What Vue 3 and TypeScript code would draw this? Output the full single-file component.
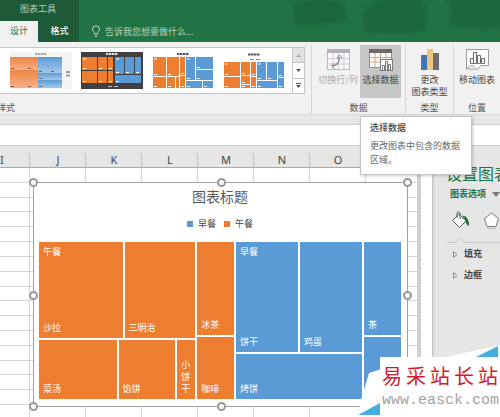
<script setup lang="ts">
interface Rect {
  x: number
  y: number
  w: number
  h: number
  blue: boolean
}
interface Thumb {
  name: string
  kind: 'soft' | 'dark' | 'plain' | 'legend'
}

const thumbs: Thumb[] = [
  { name: '样式 1', kind: 'soft' },
  { name: '样式 2', kind: 'dark' },
  { name: '样式 3', kind: 'plain' },
  { name: '样式 4', kind: 'legend' },
]

const fullRects: Rect[] = [
  { x: 1, y: 5, w: 13, h: 19, blue: false },
  { x: 15, y: 5, w: 12, h: 19, blue: false },
  { x: 28, y: 5, w: 5, h: 18, blue: false },
  { x: 1, y: 25, w: 13, h: 11, blue: false },
  { x: 15, y: 25, w: 8, h: 11, blue: false },
  { x: 24, y: 25, w: 3, h: 11, blue: false },
  { x: 28, y: 24, w: 5, h: 12, blue: false },
  { x: 34, y: 5, w: 9, h: 23, blue: true },
  { x: 44, y: 5, w: 17, h: 12, blue: true },
  { x: 44, y: 18, w: 17, h: 10, blue: true },
  { x: 34, y: 29, w: 16, h: 7, blue: true },
  { x: 51, y: 29, w: 10, h: 7, blue: true },
]
const softRects: Rect[] = [
  { x: 0, y: 5, w: 17, h: 13, blue: false },
  { x: 17, y: 5, w: 11, h: 13, blue: false },
  { x: 0, y: 18, w: 17, h: 18, blue: false },
  { x: 17, y: 18, w: 11, h: 18, blue: false },
  { x: 28, y: 5, w: 12, h: 16, blue: true },
  { x: 40, y: 5, w: 12, h: 16, blue: true },
  { x: 28, y: 21, w: 24, h: 7, blue: true },
  { x: 28, y: 28, w: 24, h: 8, blue: true },
]
const darkRects: Rect[] = [
  { x: 1, y: 5, w: 15, h: 13, blue: false },
  { x: 17, y: 5, w: 9, h: 13, blue: false },
  { x: 27, y: 5, w: 5, h: 13, blue: false },
  { x: 1, y: 19, w: 15, h: 12, blue: false },
  { x: 17, y: 19, w: 9, h: 12, blue: false },
  { x: 27, y: 19, w: 5, h: 12, blue: false },
  { x: 34, y: 5, w: 9, h: 17, blue: true },
  { x: 44, y: 5, w: 9, h: 17, blue: true },
  { x: 54, y: 5, w: 6, h: 17, blue: true },
  { x: 34, y: 23, w: 26, h: 8, blue: true },
]
const legendRects: Rect[] = [
  { x: 1, y: 10, w: 16, h: 14, blue: false },
  { x: 18, y: 10, w: 9, h: 13, blue: false },
  { x: 28, y: 10, w: 5, h: 14, blue: false },
  { x: 1, y: 25, w: 16, h: 11, blue: false },
  { x: 18, y: 24, w: 9, h: 8, blue: false },
  { x: 18, y: 33, w: 9, h: 3, blue: false },
  { x: 28, y: 25, w: 5, h: 11, blue: false },
  { x: 34, y: 10, w: 9, h: 18, blue: true },
  { x: 44, y: 10, w: 10, h: 18, blue: true },
  { x: 55, y: 10, w: 6, h: 15, blue: true },
  { x: 34, y: 29, w: 20, h: 7, blue: true },
  { x: 55, y: 26, w: 6, h: 10, blue: true },
]
const rectsOf: Record<Thumb['kind'], Rect[]> = {
  soft: softRects,
  dark: darkRects,
  plain: fullRects,
  legend: legendRects,
}
function fillOf(kind: Thumb['kind'], blue: boolean): string {
  if (kind === 'soft') return blue ? 'url(#soft-blue)' : 'url(#soft-orange)'
  return blue ? '#5b9bd5' : '#ed7d31'
}

const columns: string[] = ['I', 'J', 'K', 'L', 'M', 'N', 'O']
const rowCount = 17
const handles: string[] = ['nw', 'n', 'ne', 'w', 'e', 'sw', 's', 'se']
const brand: string[] = ['易', '采', '站', '长', '站']
</script>

<template>
  <div class="app">
    <header class="titlebar">
      <svg class="smudge" width="230" height="42" viewBox="0 0 230 42" aria-hidden="true">
        <defs><filter id="haze"><feGaussianBlur stdDeviation="2" /></filter></defs>
        <g fill="#1f663c" filter="url(#haze)">
          <path d="M14 4 Q30 -4 64 2 L66 22 Q40 26 14 24Z" />
          <path d="M82 10 Q100 -6 140 -4 L148 12 L146 31 Q110 37 84 31Z" />
          <path d="M164 -4 H236 V28 Q190 31 166 26 Q176 12 164 -4Z" />
        </g>
      </svg>
      <div class="context">
        <span class="context-name">图表工具</span>
        <nav class="tabs">
          <a class="tab active" href="#design">设计</a>
          <a class="tab" href="#format">格式</a>
        </nav>
      </div>
      <button class="tellme" type="button">
        <svg width="10" height="13" viewBox="0 0 10 13" fill="none" stroke="#c5dccd" aria-hidden="true">
          <path d="M3.5 9 V8 C3.5 7 1.5 6.3 1.5 4.3 A3.5 3.5 0 0 1 8.5 4.3 C8.5 6.3 6.5 7 6.5 8 V9 M3.5 9.5 H6.5 M4 11.5 H6" />
        </svg>
        <span>告诉我您想要做什么...</span>
      </button>
    </header>

    <section class="ribbon">
      <div class="group styles">
        <div class="gallery">
          <div class="thumbs">
            <button v-for="t in thumbs" :key="t.name" class="thumb" type="button" :aria-label="t.name">
              <svg width="62" height="37" viewBox="0 0 62 37" aria-hidden="true">
                <defs>
                  <linearGradient id="soft-orange" x1="0" y1="0" x2="0" y2="1">
                    <stop offset="0" stop-color="#ee8543" /><stop offset="1" stop-color="#f7b08a" />
                  </linearGradient>
                  <linearGradient id="soft-blue" x1="0" y1="0" x2="0" y2="1">
                    <stop offset="0" stop-color="#5b9bd5" /><stop offset="1" stop-color="#a5c8ea" />
                  </linearGradient>
                </defs>
                <rect width="62" height="37" :fill="t.kind === 'dark' ? '#404040' : t.kind === 'soft' ? '#f4f4f4' : '#fff'" />
                <path
                  :d="t.kind === 'legend' ? 'M25 2.5 H37' : 'M25 2 H37'"
                  :stroke="t.kind === 'dark' ? '#ddd' : t.kind === 'soft' ? '#aaa' : '#555'"
                  stroke-width="2" stroke-dasharray="2.5 .5"
                />
                <path v-if="t.kind === 'legend'" d="M27 7.5 H31 M33 7.5 H37" stroke="#888" />
                <path v-if="t.kind === 'dark'" d="M27 34.5 H31 M33 34.5 H37" stroke="#bbb" />
                <path v-if="t.kind === 'soft'" d="M56 20 H60 M56 23.500 H60" stroke="#999" stroke-width="2" />
                <g v-for="(r, i) in rectsOf[t.kind]" :key="i">
                  <rect :x="r.x" :y="r.y" :width="r.w" :height="r.h" :fill="fillOf(t.kind, r.blue)" />
                  <path
                    v-if="r.w > 4"
                    :d="`M${r.x + 1} ${r.y + r.h - 1.5} h3`"
                    :stroke="t.kind === 'soft' ? '#805a48' : '#fff'"
                  />
                </g>
                <path v-if="t.kind !== 'soft'" :d="t.kind === 'legend' ? 'M2 12 h3 M35 12 h3' : 'M2 7 h3 M35 7 h3'" stroke="#fff" />
              </svg>
            </button>
          </div>
          <div class="scroller">
            <button type="button" class="off" aria-label="上一行">
              <svg width="5" height="3" viewBox="0 0 5 3"><path d="M0 3 L2.500 0 L5 3Z" fill="#aaa" /></svg>
            </button>
            <button type="button" aria-label="下一行">
              <svg width="5" height="3" viewBox="0 0 5 3"><path d="M0 0 L2.500 3 L5 0Z" fill="#555" /></svg>
            </button>
            <button type="button" aria-label="其他">
              <svg width="5" height="5" viewBox="0 0 5 5"><path d="M0 0 H5 V1 H0Z M0 2 L2.500 5 L5 2Z" fill="#555" /></svg>
            </button>
          </div>
        </div>
        <span class="caption start">样式</span>
      </div>

      <div class="group data">
        <div class="buttons">
          <button class="big disabled" type="button" disabled>
            <svg width="23" height="22" viewBox="0 0 23 22" fill="none" aria-hidden="true">
              <rect x=".5" y=".5" width="22" height="20" fill="#faf8fb" stroke="#bdb6c0" />
              <path d="M0 0 H23 V4 H0Z" fill="#b5aeb8" />
              <path d="M6 4 V20 M11.500 4 V20 M17 4 V20 M1 9.500 H22 M1 15 H22" stroke="#d0cad3" />
              <path d="M5 17 Q12 17 12.500 8" stroke="#8f8794" stroke-width="1.500" />
              <path d="M9.500 9.500 L12.700 6 L15.500 9.500 M7.500 14 L4.500 17 L7.500 19.500" stroke="#8f8794" />
            </svg>
            <span>切换行/列</span>
          </button>
          <div class="tip-anchor">
            <button class="big picked" type="button" aria-describedby="tip">
              <svg width="24" height="22" viewBox="0 0 24 22" fill="none" aria-hidden="true">
                <rect x=".5" y=".5" width="22" height="18" fill="#fff" stroke="#9b8a80" />
                <path d="M0 0 H23 V4 H0Z" fill="#6d6866" />
                <path d="M6 4 V18 M11.500 4 V18 M17 4 V18 M1 8.500 H22 M1 13 H22" stroke="#d9a27d" />
                <rect x="11.500" y="10.500" width="12" height="11" fill="#fff" stroke="#777" />
                <path d="M13.500 21 V16.500 H15.500 V21 M16.500 21 V12.500 H18.500 V21 M19.500 21 V15.500 H21.500 V21" stroke="#777" />
              </svg>
              <span>选择数据</span>
            </button>
            <div id="tip" class="tooltip" role="tooltip">
              <strong>选择数据</strong>
              <p>更改图表中包含的数据区域。</p>
            </div>
          </div>
        </div>
        <span class="caption">数据</span>
      </div>

      <div class="group type">
        <div class="buttons">
          <button class="big" type="button">
            <svg width="18" height="22" viewBox="0 0 18 22" aria-hidden="true">
              <path d="M0 6 H6 V21 H0Z" fill="#3f76b5" />
              <path d="M6 0 H12 V21 H6Z" fill="#eec57c" />
              <path d="M12 4 H18 V21 H12Z" fill="#6f6f6f" />
            </svg>
            <span>更改<br />图表类型</span>
          </button>
        </div>
        <span class="caption">类型</span>
      </div>

      <div class="group place">
        <div class="buttons">
          <button class="big" type="button">
            <svg width="23" height="22" viewBox="0 0 23 22" fill="none" stroke="#6b6b6b" aria-hidden="true">
              <path d="M.5 .5 H22.500 V16.500 H15 L12 20 H.5Z" fill="#fff" stroke="#999" />
              <path d="M4.500 14.500 V9.500 H7.500 V14.500Z M7.500 14.500 V3.500 H10.500 V14.500Z M11.500 14.500 V6.500 H14.500 V14.500Z M15.500 14.500 V9.500 H18.500 V14.500Z" />
              <path d="M1 19 L6 16.500 L9 18.500" stroke="#999" />
            </svg>
            <span>移动图表</span>
          </button>
        </div>
        <span class="caption">位置</span>
      </div>
    </section>

    <input class="formula" type="text" aria-label="编辑栏" />

    <main class="work">
      <section class="sheet">
        <table class="grid">
          <colgroup>
            <col class="c-first" />
            <col v-for="n in 6" :key="n" class="c-mid" />
            <col />
          </colgroup>
          <thead>
            <tr>
              <th v-for="c in columns" :key="c" scope="col">{{ c }}</th>
              <th></th>
            </tr>
          </thead>
          <tbody>
            <tr v-for="r in rowCount" :key="r">
              <td v-for="c in columns" :key="c"></td>
              <td></td>
            </tr>
          </tbody>
        </table>

        <article class="chart">
          <h1>图表标题</h1>
          <ul class="legend">
            <li><i class="blue"></i>早餐</li>
            <li><i class="orange"></i>午餐</li>
          </ul>
          <div class="treemap">
            <div class="half lunch">
              <div class="stack wide">
                <div class="line upper">
                  <div class="tile salad"><span>午餐</span><span>沙拉</span></div>
                  <div class="tile sandwich"><span>三明治</span></div>
                </div>
                <div class="line lower">
                  <div class="tile soup"><span>菜汤</span></div>
                  <div class="tile pie"><span>馅饼</span></div>
                  <div class="tile cookie"><span>小饼干</span></div>
                </div>
              </div>
              <div class="stack narrow">
                <div class="tile tea"><span>冰茶</span></div>
                <div class="tile coffee"><span>咖啡</span></div>
              </div>
            </div>
            <div class="half breakfast">
              <div class="stack wide">
                <div class="line tall">
                  <div class="tile even"><span>早餐</span><span>饼干</span></div>
                  <div class="tile even"><span>鸡蛋</span></div>
                </div>
                <div class="tile short"><span>烤饼</span></div>
              </div>
              <div class="stack narrow">
                <div class="tile tea"><span>茶</span></div>
                <div class="tile coffee"></div>
              </div>
            </div>
          </div>
          <b v-for="h in handles" :key="h" class="handle" :class="h"></b>
        </article>
      </section>

      <aside class="pane">
        <h2>设置图表区格式</h2>
        <button class="options" type="button">
          <span>图表选项</span>
          <svg width="8" height="5" viewBox="0 0 8 5"><path d="M0 0 H8 L4 5Z" fill="#777" /></svg>
        </button>
        <div class="icons">
          <button type="button" aria-label="填充与线条">
            <svg width="19" height="18" viewBox="0 0 19 18" fill="none" aria-hidden="true">
              <path d="M8 3 L15 10 L8.500 16.500 L1.500 9.500Z" fill="#fff" stroke="#555" />
              <path d="M6 7 V2.500 Q6 1 7.500 1 Q9 1 9 2.500 V8" stroke="#217346" />
              <path d="M11 4.500 Q18.500 5 18 15 Q14 13 15 9.500Z" fill="#217346" />
            </svg>
          </button>
          <button type="button" aria-label="效果">
            <svg width="17" height="17" viewBox="0 0 17 17" fill="none" stroke="#777" aria-hidden="true">
              <path d="M8.500 1 L15.500 6.500 L13 14.500 H4 L1.500 6.500Z" fill="#fff" />
              <path d="M4 16.500 H13" stroke="#bbb" />
            </svg>
          </button>
        </div>
        <svg class="notch" width="60" height="6" viewBox="0 0 60 6" fill="none" aria-hidden="true">
          <path d="M0 5.500 H9 L14 .5 L19 5.500 H60" stroke="#c8c8c8" />
        </svg>
        <button v-for="s in ['填充', '边框']" :key="s" class="section" type="button">
          <svg width="5" height="7" viewBox="0 0 5 7"><path d="M.5 .7 L4 3.500 L.5 6.300Z" fill="none" stroke="#888" /></svg>
          <span>{{ s }}</span>
        </button>
      </aside>
    </main>

    <div class="mark">
      <svg width="142" height="71" viewBox="0 0 142 71" aria-hidden="true">
        <path d="M0 71 L3 54 L11 27 L24 23 V11 H88 L139 0 H142 V71Z" fill="#fff" />
        <path d="M0 69 L22 57 V69Z M118 11 L140 0 V11Z" fill="#45aede" />
      </svg>
      <div class="plate">
        <div class="brand"><span v-for="(c, i) in brand" :key="i">{{ c }}</span></div>
        <span class="site">www.easck.com</span>
      </div>
    </div>
  </div>
</template>

<style>
body {
  margin: 0;
}
</style>

<style scoped>
.app {
  position: relative;
  display: flex;
  flex-direction: column;
  height: 100vh;
  overflow: hidden;
  background: #e6e6e6;
  color: #444;
  font: 9px/12px "Noto Sans CJK SC", sans-serif;
}
.app * {
  box-sizing: border-box;
}
button {
  margin: 0;
  padding: 0;
  border: 0;
  background: none;
  color: inherit;
  font: inherit;
}
svg {
  display: block;
  flex: none;
}

.titlebar {
  position: relative;
  display: flex;
  align-items: stretch;
  flex: none;
  background: #227446;
}
.smudge {
  position: absolute;
  top: 0;
  right: -10px;
}
.context {
  width: 79px;
  background: #1d5a37;
}
.context-name {
  display: block;
  padding: 2px 0 5px 20px;
  line-height: 14px;
  color: #b3cfbd;
}
.tabs {
  display: flex;
}
.tab {
  width: 41px;
  height: 21px;
  padding-left: 2px;
  color: #fff;
  font-weight: 500;
  line-height: 19px;
  text-align: center;
  text-decoration: none;
}
.tab.active {
  width: 38px;
  padding: 0;
  background: #f1f1f1;
  color: #217346;
  font-weight: 400;
}
.tellme {
  display: flex;
  align-items: center;
  align-self: flex-end;
  gap: 4px;
  height: 21px;
  margin-left: 12px;
  color: #b3d2bf;
}

.ribbon {
  display: flex;
  flex: none;
  height: 73px;
  padding-top: 3px;
  background: #f1f1f1;
  border-bottom: 1px solid #d8d8d8;
}
.group {
  display: flex;
  flex-direction: column;
  align-items: center;
  justify-content: space-between;
  border-right: 1px solid #d6d6d6;
}
.group.styles {
  flex: 1;
  align-items: stretch;
  padding: 2px 6px 0 0;
}
.group.data {
  width: 94px;
}
.group.type {
  width: 48px;
}
.group.place {
  width: 46px;
  border-right: 0;
}
.caption {
  color: #555;
}
.caption.start {
  margin-left: -3px;
}
.gallery {
  display: flex;
  height: 47px;
  border: 1px solid #c6c6c6;
  border-left: 0;
  background: #fff;
}
.thumbs {
  display: flex;
  flex: 1;
  align-items: center;
  gap: 9px;
  padding-left: 10px;
}
.scroller {
  display: flex;
  flex-direction: column;
  width: 12px;
  border-left: 1px solid #c6c6c6;
}
.scroller button {
  display: flex;
  flex: 1;
  align-items: center;
  justify-content: center;
}
.scroller button + button {
  border-top: 1px solid #c6c6c6;
}
.scroller .off {
  background: #e1e1e1;
}
.buttons {
  display: flex;
}
.big {
  display: flex;
  flex-direction: column;
  align-items: center;
  gap: 3px;
  width: 44px;
  height: 53px;
  padding-top: 4px;
  white-space: nowrap;
}
.big.disabled {
  color: #aaa;
}
.big.picked {
  width: 41px;
  background: #c6c6c6;
}
.tip-anchor {
  position: relative;
}
.tooltip {
  position: absolute;
  z-index: 5;
  top: 71px;
  left: 0;
  width: 112px;
  padding: 4px 8px 7px 9px;
  border: 1px solid #c4c4c4;
  background: #fff;
  box-shadow: 1px 1px 3px #0003;
  line-height: 14px;
}
.tooltip strong {
  display: block;
  font-weight: 500;
}
.tooltip p {
  margin: 4px 0 0;
  color: #666;
}

.formula {
  flex: none;
  width: 100%;
  height: 22px;
  margin-top: 9px;
  padding: 0 8px;
  border: solid #cfcfcf;
  border-width: 1px 0;
  background: #fff;
}

.work {
  display: flex;
  flex: 1;
  min-height: 0;
}
.sheet {
  position: relative;
  flex: 1;
  min-width: 0;
  border-right: 3px solid #d0d0d0;
}
.grid {
  width: 100%;
  height: calc(100% + 3px);
  table-layout: fixed;
  border-spacing: 0;
}
.c-first {
  width: 30px;
}
.c-mid {
  width: 56px;
}
.grid th {
  height: 22px;
  padding: 7px 0 0;
  border-bottom: 1px solid #ababab;
  background: linear-gradient(#c2c2c2, #c2c2c2) right bottom / 1px 14px no-repeat #e6e6e6;
  font: 11px/14px "Noto Sans", sans-serif;
}
.grid th:first-child {
  text-align: left;
}
.grid td {
  padding: 0;
  border: solid #d4d4d4;
  border-width: 0 1px 1px 0;
  background: #fff;
}

.chart {
  position: absolute;
  top: 36px;
  right: 10px;
  bottom: 10px;
  left: 33px;
  display: flex;
  flex-direction: column;
  padding: 3px 6px 7px 5px;
  border: 1px solid #a0a0a0;
  background: #fff;
}
.chart h1 {
  margin: 0;
  color: #595959;
  font-size: 14px;
  font-weight: 400;
  line-height: 20px;
  text-align: center;
}
.legend {
  display: flex;
  justify-content: center;
  gap: 8px;
  margin: 12px 0;
  padding: 0;
  list-style: none;
}
.legend li {
  display: flex;
  align-items: center;
  gap: 5px;
}
.legend i {
  width: 6px;
  height: 6px;
}
.legend .blue {
  background: #5b9bd5;
}
.legend .orange {
  background: #ed7d31;
}
.treemap {
  display: flex;
  flex: 1;
  gap: 2px;
}
.half {
  display: flex;
  gap: 2px;
}
.lunch {
  flex: 195;
}
.breakfast {
  flex: 165;
}
.stack {
  display: flex;
  flex-direction: column;
  gap: 2px;
}
.lunch .wide {
  flex: 157;
}
.breakfast .wide {
  flex: 126;
}
.narrow {
  flex: 37;
}
.line {
  display: flex;
  gap: 2px;
}
.upper {
  flex: 97;
}
.lower {
  flex: 59;
}
.tall {
  flex: 111;
}
.tile {
  display: flex;
  flex-direction: column;
  justify-content: space-between;
  min-width: 0;
  min-height: 0;
  background: #ed7d31;
  color: #fff;
}
.tile span {
  margin: 4px;
}
.tile span:only-child {
  margin-top: auto;
}
.breakfast .tile {
  background: #5b9bd5;
}
.salad {
  flex: 84 0 0;
}
.sandwich {
  flex: 71 0 0;
}
.soup {
  flex: 78 0 0;
}
.pie {
  flex: 57 0 0;
}
.cookie {
  flex: 18 0 0;
}
.tea {
  flex: 94 0 0;
}
.coffee {
  flex: 62 0 0;
}
.even {
  flex: 1 0 0;
}
.short {
  flex: 45 0 0;
}
.handle {
  position: absolute;
  width: 9px;
  height: 9px;
  border: 2px solid #989898;
  border-radius: 50%;
  background: #fff;
}
.nw, .n, .ne {
  top: -5px;
}
.sw, .s, .se {
  bottom: -5px;
}
.w, .e {
  top: calc(50% - 4px);
}
.nw, .w, .sw {
  left: -5px;
}
.ne, .e, .se {
  right: -5px;
}
.n, .s {
  left: calc(50% - 4px);
}

.pane {
  width: 79px;
  padding: 16px 0 0 14px;
  border-left: 11px solid #fff;
  box-shadow: inset 1px 0 #c4c4c4, inset 3px 0 #dcdcdc;
  white-space: nowrap;
  overflow: hidden;
}
.pane h2 {
  margin: 0 0 3px;
  color: #217346;
  font-size: 16px;
  font-weight: 400;
  line-height: 22px;
}
.options {
  display: flex;
  align-items: center;
  gap: 6px;
  padding-left: 4px;
  color: #217346;
  font-weight: 700;
  line-height: 14px;
}
.icons {
  display: flex;
  align-items: center;
  gap: 13px;
  margin-top: 10px;
  padding-left: 5px;
}
.notch {
  margin: 8px 0 4px;
}
.section {
  display: flex;
  align-items: center;
  gap: 6px;
  padding: 0 0 7px 7px;
  font-weight: 700;
  line-height: 14px;
}

.mark {
  position: absolute;
  right: 0;
  bottom: 0;
}
.plate {
  position: absolute;
  right: 0;
  bottom: 0;
  width: 120px;
  height: 60px;
  padding: 5px 0 0 2px;
  background: #fff;
}
.brand {
  display: flex;
  justify-content: space-between;
  padding-right: 2px;
  color: #d0202e;
  font-size: 20px;
  line-height: 28px;
}
.site {
  display: block;
  margin-top: 2px;
  color: #a6a0a0;
  font: 15px/18px "Liberation Mono", monospace;
}
</style>
